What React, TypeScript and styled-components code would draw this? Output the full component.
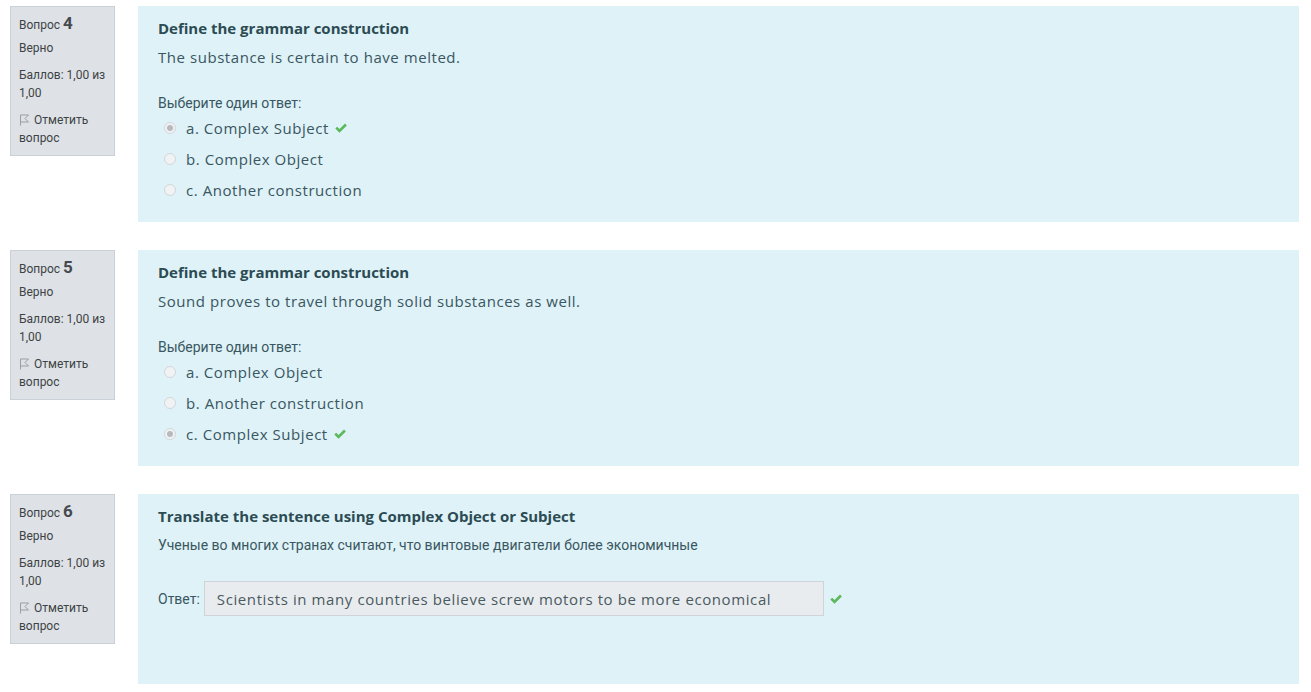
import React from 'react'
import styled, { createGlobalStyle } from 'styled-components'

const GlobalStyle = createGlobalStyle`
  html, body {
    margin: 0;
    padding: 0;
    background: #fff;
  }
  body {
    font-family: 'Open Sans', 'Noto Sans', sans-serif;
    color: #3a5660;
  }
`

const Page = styled.div`
  display: flex;
  flex-direction: column;
  gap: 28px;
  padding: 6px 12px 8px 10px;
`

const Question = styled.div`
  display: grid;
  grid-template-columns: 105px 1fr;
  column-gap: 23px;
  align-items: start;
`

const Info = styled.div`
  background-color: #dee2e6;
  border: 1px solid #cad0d7;
  box-sizing: border-box;
  padding: 7px 8px 8px 8px;
  font-family: Roboto, 'Liberation Sans', sans-serif;
  font-size: 12px;
  line-height: 18px;
  color: #3d4245;
`

const InfoNo = styled.div`
  margin-bottom: 5px;

  b {
    font-size: 17px;
    font-weight: 700;
    color: #454a4e;
  }
`

const InfoLine = styled.div`
  margin-bottom: 9px;
`

const FlagLink = styled.div`
  svg {
    vertical-align: -2px;
    margin-right: 4px;
  }
`

const Content = styled.div<{ $height: number }>`
  background-color: #def2f8;
  min-height: ${({ $height }) => $height}px;
  box-sizing: border-box;
  padding: 11px 20px;
`

const Title = styled.div`
  font-size: 15px;
  font-weight: 700;
  color: #2c4b53;
  line-height: 22px;
`

const Text = styled.div<{ $cyr?: boolean }>`
  margin-top: 7px;
  font-family: ${({ $cyr }) => ($cyr ? "Roboto, 'Liberation Sans', sans-serif" : "'Open Sans', sans-serif")};
  font-size: ${({ $cyr }) => ($cyr ? '14px' : '15px')};
  letter-spacing: ${({ $cyr }) => ($cyr ? '0' : '0.55px')};
  line-height: 22px;
  color: #3a5660;
`

const Prompt = styled.div`
  margin-top: 25px;
  font-family: Roboto, 'Liberation Sans', sans-serif;
  font-size: 14px;
  line-height: 20px;
  color: #3a5660;
`

const Options = styled.div`
  display: flex;
  flex-direction: column;
  gap: 9px;
  margin-top: 4px;
  padding-left: 6px;
`

const Option = styled.label`
  display: flex;
  align-items: center;
  height: 22px;
  font-size: 15px;
  letter-spacing: 0.55px;
  color: #3a5660;
`

const Radio = styled.span<{ $checked?: boolean }>`
  width: 12px;
  height: 12px;
  border-radius: 50%;
  border: 1px solid #d3d7da;
  background: #f1f2f3;
  box-sizing: border-box;
  margin-right: 10px;
  display: flex;
  align-items: center;
  justify-content: center;

  &::after {
    content: '';
    width: 6px;
    height: 6px;
    border-radius: 50%;
    background: ${({ $checked }) => ($checked ? '#b5babe' : 'transparent')};
  }
`

const AnswerRow = styled.div`
  display: flex;
  align-items: center;
  margin-top: 25px;
`

const AnswerLabel = styled.span`
  font-family: Roboto, 'Liberation Sans', sans-serif;
  font-size: 14px;
  color: #3a5660;
  margin-right: 4px;
`

const AnswerBox = styled.div`
  width: 620px;
  height: 35px;
  box-sizing: border-box;
  background: #e9ecef;
  border: 1px solid #ced4da;
  padding: 0 12px;
  display: flex;
  align-items: center;
  font-size: 15px;
  letter-spacing: 0.6px;
  color: #495a60;
`

const Check = ({ size = 14 }: { size?: number }) => (
  <svg width={size} height={size} viewBox="0 0 16 16" style={{ marginLeft: 5 }}>
    <path d="M1.5 8.6 L3.6 6.5 L6.3 9.2 L12.6 2.9 L14.7 5 L6.3 13.4 Z" fill="#5cb85c" />
  </svg>
)

const Flag = () => (
  <svg width="11" height="12" viewBox="0 0 11 12">
    <path d="M1.5 11.5 V1 H9.5 L6 4.5 L9.5 8 H1.5" fill="none" stroke="#9a9fa3" strokeWidth="1" />
  </svg>
)

type Opt = { label: string; checked?: boolean }

const QInfo = ({ n }: { n: number }) => (
  <Info>
    <InfoNo>
      Вопрос <b>{n}</b>
    </InfoNo>
    <InfoLine>Верно</InfoLine>
    <InfoLine>
      Баллов: 1,00 из
      <br />
      1,00
    </InfoLine>
    <FlagLink>
      <Flag />
      Отметить вопрос
    </FlagLink>
  </Info>
)

const ChoiceQuestion = ({ n, text, options }: { n: number; text: string; options: Opt[] }) => (
  <Question>
    <QInfo n={n} />
    <Content $height={216}>
      <Title>Define the grammar construction</Title>
      <Text>{text}</Text>
      <Prompt>Выберите один ответ:</Prompt>
      <Options>
        {options.map((o) => (
          <Option key={o.label}>
            <Radio $checked={o.checked} />
            {o.label}
            {o.checked && <Check />}
          </Option>
        ))}
      </Options>
    </Content>
  </Question>
)

export default function App() {
  return (
    <>
      <GlobalStyle />
      <Page>
        <ChoiceQuestion
          n={4}
          text="The substance is certain to have melted."
          options={[
            { label: 'a. Complex Subject', checked: true },
            { label: 'b. Complex Object' },
            { label: 'c. Another construction' },
          ]}
        />
        <ChoiceQuestion
          n={5}
          text="Sound proves to travel through solid substances as well."
          options={[
            { label: 'a. Complex Object' },
            { label: 'b. Another construction' },
            { label: 'c. Complex Subject', checked: true },
          ]}
        />
        <Question>
          <QInfo n={6} />
          <Content $height={190}>
            <Title>Translate the sentence using Complex Object or Subject</Title>
            <Text $cyr>Ученые во многих странах считают, что винтовые двигатели более экономичные</Text>
            <AnswerRow>
              <AnswerLabel>Ответ:</AnswerLabel>
              <AnswerBox>Scientists in many countries believe screw motors to be more economical</AnswerBox>
              <Check />
            </AnswerRow>
          </Content>
        </Question>
      </Page>
    </>
  )
}
